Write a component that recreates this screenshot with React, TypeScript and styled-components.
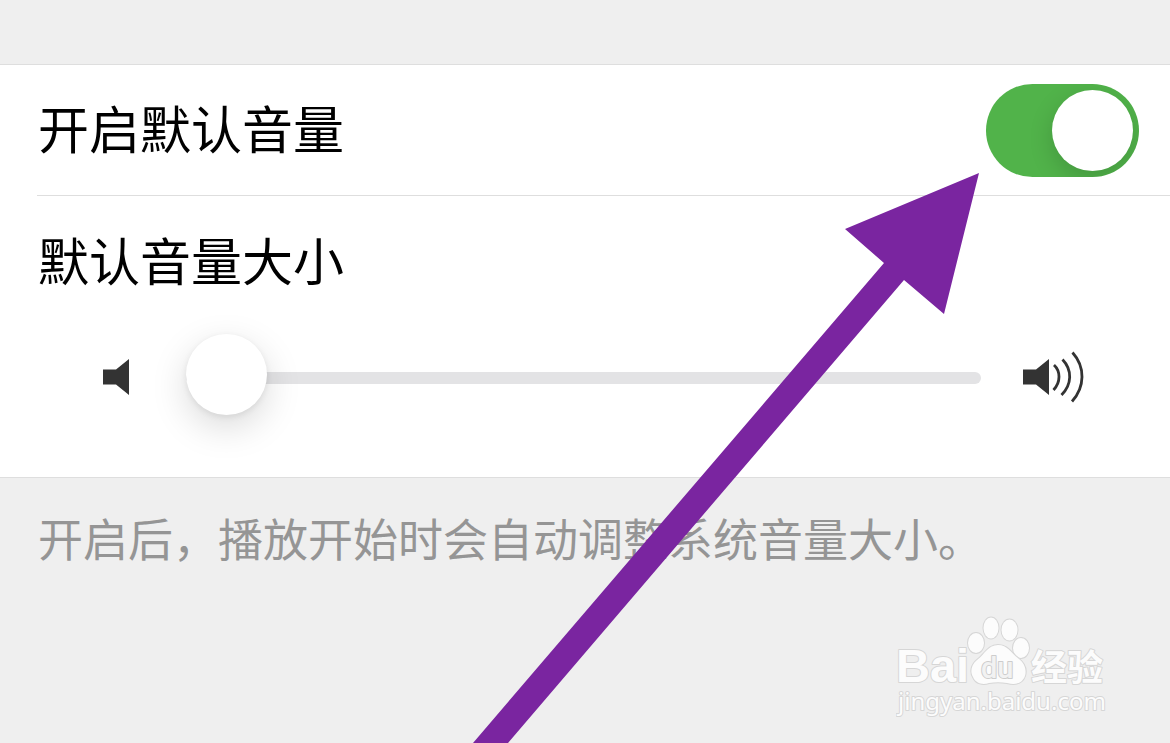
import React, { useState } from "react";
import styled, { createGlobalStyle } from "styled-components";

const GlobalStyle = createGlobalStyle`
  *, *::before, *::after { box-sizing: border-box; }
  html, body { margin: 0; padding: 0; }
  body {
    background: #efefef;
    color: #000;
    font-family: "Noto Sans CJK SC", sans-serif;
  }
`;

const Page = styled.main`
  position: relative;
  min-height: 100vh;
  padding-top: 64px;
  overflow: hidden;
  background: #efefef;
`;

const Group = styled.section`
  background: #fff;
  border-top: 1px solid #dedede;
  border-bottom: 1px solid #dedede;
`;

const SwitchRow = styled.div`
  display: flex;
  align-items: center;
  justify-content: space-between;
  height: 131px;
  margin-left: 37px;
  padding: 0 31px 0 1px;
  border-bottom: 1px solid #dedede;
`;

const Label = styled.label`
  display: block;
  padding-bottom: 6px;
  font-size: 51px;
  line-height: 76px;
`;

const Switch = styled.input`
  appearance: none;
  flex: none;
  width: 153px;
  height: 93px;
  margin: 0;
  padding: 6px;
  border-radius: 47px;
  background: ${(p) => (p.checked ? "#51b34a" : "#e4e4e6")};
  display: flex;
  justify-content: ${(p) => (p.checked ? "flex-end" : "flex-start")};
  overflow: hidden;
  cursor: pointer;

  &::before {
    content: "";
    width: 81px;
    height: 81px;
    border-radius: 50%;
    background: #fff;
    box-shadow: 0 8px 24px rgba(0, 0, 0, 0.16);
  }
`;

const VolumeBlock = styled.div`
  padding: 25px 0 41px 38px;
`;

const SliderRow = styled.div`
  display: flex;
  align-items: center;
  height: 119px;
  margin-top: 14px;
  padding: 0 85px 0 65px;
`;

const Icon = styled.svg`
  display: block;
  flex: none;
  fill: #333;
`;

const Slider = styled.input`
  appearance: none;
  flex: 1;
  min-width: 0;
  height: 81px;
  margin: 2px 42px 0 57px;
  background: transparent;
  cursor: pointer;

  &::-webkit-slider-runnable-track {
    height: 12px;
    border-radius: 6px;
    background: #e3e3e5;
  }

  &::-webkit-slider-thumb {
    appearance: none;
    width: 81px;
    height: 81px;
    margin-top: -38px;
    border-radius: 50%;
    background: #fff;
    box-shadow: 0 12px 36px rgba(0, 0, 0, 0.15), 0 2px 6px rgba(0, 0, 0, 0.08);
  }
`;

const Note = styled.p`
  margin: 0;
  padding: 26px 38px;
  color: #959595;
  font-size: 45px;
  line-height: 68px;
`;

const Arrow = styled.svg`
  position: absolute;
  top: 173px;
  right: 191px;
  pointer-events: none;
`;

const Watermark = styled.svg`
  position: absolute;
  right: 50px;
  bottom: 13px;
  fill: #fcfcfc;
  stroke: #d6d6d6;
  stroke-width: 2px;
  stroke-linejoin: round;
  paint-order: stroke;
  pointer-events: none;
`;

const Brand = styled.text`
  font: 700 47px "Liberation Sans", sans-serif;
`;

const BrandInner = styled.text`
  font: 500 29px Roboto, sans-serif;
  fill: #f2f2f2;
  stroke: #cdcdcd;
`;

const BrandName = styled.text`
  font: 700 36px "Noto Sans CJK SC", sans-serif;
`;

const Site = styled.text`
  font: 400 24px "Noto Sans", sans-serif;
`;

export default function App() {
  const [enabled, setEnabled] = useState(true);
  const [volume, setVolume] = useState(0);

  return (
    <>
      <GlobalStyle />
      <Page>
        <Group>
          <SwitchRow>
            <Label htmlFor="enable">开启默认音量</Label>
            <Switch
              id="enable"
              type="checkbox"
              role="switch"
              checked={enabled}
              onChange={(e) => setEnabled(e.target.checked)}
            />
          </SwitchRow>
          <VolumeBlock>
            <Label htmlFor="volume">默认音量大小</Label>
            <SliderRow>
              <Icon width="26" height="36" viewBox="0 0 26 36" aria-hidden="true">
                <path d="M0 10.500H13L26 0V36L13 25.500H0Z" />
              </Icon>
              <Slider
                id="volume"
                type="range"
                min={0}
                max={100}
                value={volume}
                onChange={(e) => setVolume(Number(e.target.value))}
              />
              <Icon width="62" height="52" viewBox="0 0 62 52" aria-hidden="true">
                <path d="M0 18.500H13L26 8V44L13 33.500H0Z" />
                <g fill="none" stroke="#333" strokeWidth="2.800">
                  <path d="M31 14C37.500 20 38 31 30.500 39" />
                  <path d="M39.500 8.500C49.500 19 49 33.500 38.500 44" />
                  <path d="M49.500 1.500C62.500 16 62 36 49 50.500" />
                </g>
              </Icon>
            </SliderRow>
          </VolumeBlock>
        </Group>
        <Note>开启后，播放开始时会自动调整系统音量大小。</Note>
        <Arrow width="506" height="570" viewBox="0 0 506 570" aria-hidden="true">
          <path fill="#7a25a0" d="M506 0L471 141L431 107L35 570H0L411 90L372 56Z" />
        </Arrow>
        <Watermark width="224" height="114" viewBox="0 0 224 114" role="img" aria-label="Baidu">
          <Brand x="0" y="66">Bai</Brand>
          <ellipse cx="80" cy="27" rx="8" ry="10" />
          <ellipse cx="95" cy="12" rx="7.500" ry="10.500" />
          <ellipse cx="113.500" cy="14" rx="8" ry="10.500" />
          <ellipse cx="125" cy="32" rx="8" ry="10" />
          <path d="M102 29C92 29 89 38 81 44C75 49 74 56 77 61C80 68 87 69 93 67C99 66 105 66 111 67C119 69 126 68 129 60C131 53 128 47 123 43C115 37 112 29 102 29Z" />
          <BrandInner x="85" y="62">du</BrandInner>
          <BrandName x="135" y="65">经验</BrandName>
          <Site x="2" y="94">jingyan.baidu.com</Site>
        </Watermark>
      </Page>
    </>
  );
}
